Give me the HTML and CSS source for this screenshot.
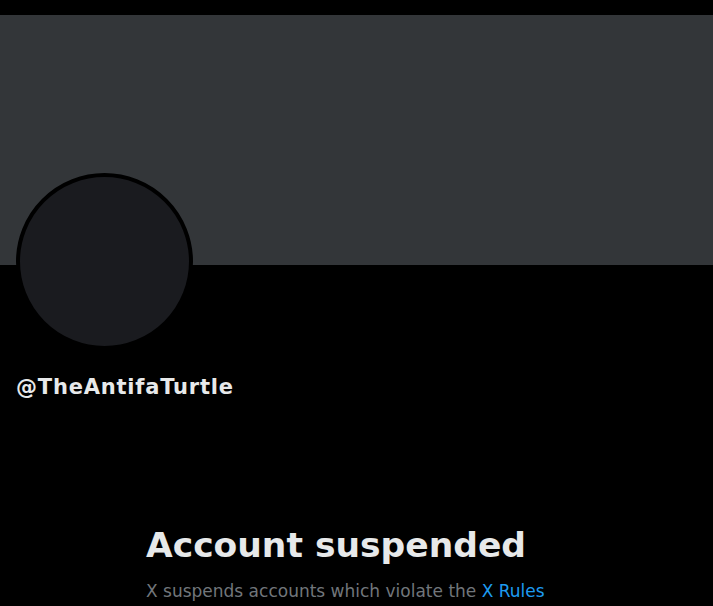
FILE: index.html
```html
<!DOCTYPE html>
<html lang="en">
<head>
  <meta charset="UTF-8">
  <meta name="viewport" content="width=device-width, initial-scale=1.0">
  <title>@TheAntifaTurtle / X</title>
  <link rel="stylesheet" href="styles.css">
</head>
<body>
  <div class="topbar"></div>
  <div class="banner"></div>
  <div class="profile">
    <div class="avatar"></div>
    <div class="handle">@TheAntifaTurtle</div>
  </div>
  <div class="empty">
    <h2>Account suspended</h2>
    <p>X suspends accounts which violate the <a href="#">X Rules</a></p>
  </div>
</body>
</html>
```

FILE: styles.css
```css
body {
  margin: 0;
  background: #000;
  color: #e7e9ea;
  font-family: "DejaVu Sans", Roboto, sans-serif;
  overflow: hidden;
}
.topbar {
  height: 15px;
}
.banner {
  height: 250px;
  background: #333639;
}
.profile {
  padding: 0 16px;
}
.avatar {
  width: 169px;
  height: 169px;
  margin-top: -92px;
  border: 4px solid #000;
  border-radius: 50%;
  background: #1a1b1f;
}
.handle {
  margin-top: 24px;
  font-size: 21px;
  font-weight: 700;
  line-height: 26px;
  letter-spacing: 0.8px;
}
.empty {
  width: 421px;
  margin: 125px auto 0;
}
.empty h2 {
  margin: 0;
  font-size: 34.5px;
  font-weight: 700;
  line-height: 40px;
}
.empty p {
  margin: 16px 0 0;
  font-size: 17px;
  line-height: 20px;
  color: #71767b;
}
.empty a {
  color: #1d9bf0;
  text-decoration: none;
}
```
